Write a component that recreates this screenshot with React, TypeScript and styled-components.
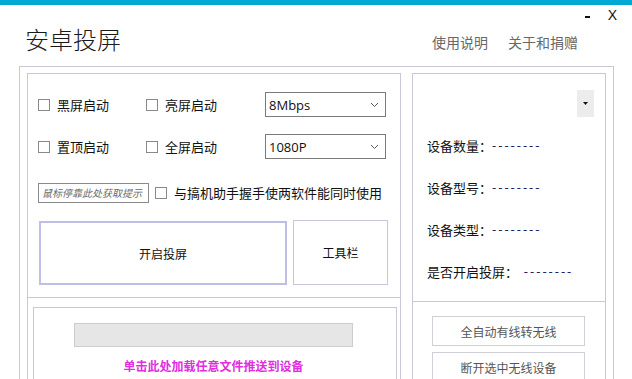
import React from "react";
import styled, { createGlobalStyle } from "styled-components";

const Global = createGlobalStyle`
  html, body { margin: 0; padding: 0; background: #fff; }
  body { font-family: "Noto Sans", "Noto Sans CJK SC", sans-serif; color: #111; }
  * { box-sizing: border-box; }
`;

const Page = styled.div`
  width: 632px;
  height: 379px;
  overflow: hidden;
  background: #fff;
  display: flex;
  flex-direction: column;
`;

const AccentBar = styled.div`
  height: 5px;
  background: #00a8d6;
  flex: none;
`;

const Header = styled.header`
  height: 61px;
  flex: none;
  display: flex;
  justify-content: space-between;
`;

const Title = styled.h1`
  margin: 0;
  padding: 22px 0 0 25px;
  font-family: "Noto Sans CJK SC", sans-serif;
  font-size: 24px;
  line-height: 24px;
  font-weight: 300;
  color: #1a1a1a;
`;

const HeaderRight = styled.div`
  display: flex;
  flex-direction: column;
  align-items: flex-end;
  padding-top: 3px;
`;

const WindowControls = styled.div`
  display: flex;
  align-items: center;
  gap: 18px;
  padding-right: 15px;
  height: 14px;
  font-family: "Liberation Sans", sans-serif;
  font-size: 14px;
  line-height: 14px;
  color: #111;
`;

const MinBtn = styled.span`
  width: 5px;
  height: 2px;
  margin-top: 3px;
  background: #111;
`;

const CloseBtn = styled.span`
  font-weight: 400;
`;

const Links = styled.nav`
  display: flex;
  gap: 20px;
  margin-top: 13px;
  padding-right: 54px;
  font-family: "Noto Sans CJK SC", sans-serif;
  font-size: 14px;
  line-height: 14px;
  color: #686868;
`;

const Frame = styled.div`
  margin-left: 19px;
  width: 595px;
  height: 330px;
  flex: none;
  border: 1px solid #c9c9d6;
  padding: 6px 7px 0 7px;
  display: flex;
  gap: 11px;
`;

const Panel = styled.section<{ $w: number }>`
  width: ${(p) => p.$w}px;
  flex: none;
  border: 1px solid #c9c9d6;
  display: flex;
  flex-direction: column;
`;

const TopSection = styled.div<{ $h: number }>`
  height: ${(p) => p.$h}px;
  flex: none;
  border-bottom: 1px solid #c9c9d6;
  display: flex;
  flex-direction: column;
`;

const OptionsArea = styled.div`
  padding: 18px 0 0 10px;
  display: flex;
  flex-direction: column;
`;

const Row = styled.div<{ $mt?: number }>`
  display: flex;
  align-items: center;
  height: 25px;
  margin-top: ${(p) => p.$mt ?? 0}px;
`;

const CheckItem = styled.label<{ $w?: number }>`
  display: flex;
  align-items: center;
  gap: 7px;
  width: ${(p) => (p.$w ? `${p.$w}px` : "auto")};
  font-family: "Noto Sans CJK SC", sans-serif;
  font-size: 13px;
  line-height: 16px;
  color: #111;
`;

const Box = styled.span`
  width: 12px;
  height: 12px;
  border: 1px solid #8a8a8a;
  background: #fff;
  flex: none;
`;

const Select = styled.div`
  width: 121px;
  height: 25px;
  border: 1px solid #7a7a7a;
  display: flex;
  align-items: center;
  justify-content: space-between;
  padding: 0 6px 0 3px;
  font-family: "Open Sans", "Noto Sans", sans-serif;
  font-size: 13px;
  color: #111;
`;

const HintBox = styled.div`
  width: 111px;
  height: 20px;
  border: 1px solid #8a8a8a;
  display: flex;
  align-items: center;
  padding-left: 3px;
  margin-right: 6px;
  font-family: "Noto Sans CJK SC", sans-serif;
  font-size: 10px;
  font-style: italic;
  color: #6a6a6a;
  white-space: nowrap;
  overflow: hidden;
`;

const ActionRow = styled.div`
  display: flex;
  align-items: flex-start;
  gap: 6px;
  margin: 15px 0 0 1px;
`;

const BigButton = styled.button`
  width: 248px;
  height: 64px;
  margin-top: 1px;
  border: 2px solid #bfbfe6;
  background: #fff;
  font-family: "Noto Sans CJK SC", sans-serif;
  font-size: 12px;
  color: #111;
  padding: 0;
`;

const ToolButton = styled.button`
  width: 95px;
  height: 65px;
  border: 1px solid #c6c6dc;
  background: #fff;
  font-family: "Noto Sans CJK SC", sans-serif;
  font-size: 12px;
  color: #111;
  padding: 0;
`;

const PushBox = styled.div`
  margin: 9px 3px 0 5px;
  flex: 1;
  border: 1px solid #c9c9d6;
  padding: 15px 0 0 40px;
`;

const PushInner = styled.div`
  width: 279px;
  display: flex;
  flex-direction: column;
  align-items: center;
`;

const Progress = styled.div`
  width: 279px;
  height: 24px;
  background: #e6e6e6;
  border: 1px solid #cdcdcd;
`;

const PushText = styled.div`
  margin-top: 11px;
  font-family: "Noto Sans CJK SC", sans-serif;
  font-size: 12px;
  line-height: 16px;
  font-weight: 700;
  color: #e02ee0;
`;

const DeviceArea = styled.div`
  display: flex;
  flex-direction: column;
`;

const DropButton = styled.div`
  align-self: flex-end;
  margin: 16px 11px 0 0;
  width: 17px;
  height: 27px;
  background: #ececec;
  display: flex;
  align-items: center;
  justify-content: center;
`;

const InfoList = styled.div`
  margin-top: 7px;
  padding-left: 14px;
  display: flex;
  flex-direction: column;
`;

const InfoRow = styled.div`
  height: 42px;
  display: flex;
  align-items: center;
  font-family: "Noto Sans CJK SC", sans-serif;
  font-size: 13px;
  color: #111;
  white-space: pre;
`;

const Dashes = styled.span`
  font-family: "Open Sans", sans-serif;
  letter-spacing: 2px;
  color: #202060;
`;

const SideButtons = styled.div`
  padding: 14px 0 0 19px;
  display: flex;
  flex-direction: column;
  gap: 6px;
`;

const SideButton = styled.button`
  width: 153px;
  height: 30px;
  border: 1px solid #cfcfd6;
  background: #fff;
  font-family: "Noto Sans CJK SC", sans-serif;
  font-size: 12px;
  color: #555;
  padding: 0;
`;

const Chevron = () => (
  <svg width="9" height="6" viewBox="0 0 9 6">
    <polyline points="1,1 4.5,4.5 8,1" fill="none" stroke="#555" strokeWidth="1" />
  </svg>
);

const Caret = () => (
  <svg width="5" height="3" viewBox="0 0 5 3">
    <polygon points="0,0 5,0 2.5,3" fill="#111" />
  </svg>
);

const Check = ({ label, w }: { label: string; w?: number }) => (
  <CheckItem $w={w}>
    <Box />
    {label}
  </CheckItem>
);

export default function App() {
  return (
    <Page>
      <Global />
      <AccentBar />
      <Header>
        <Title>安卓投屏</Title>
        <HeaderRight>
          <WindowControls>
            <MinBtn aria-label="最小化" />
            <CloseBtn>X</CloseBtn>
          </WindowControls>
          <Links>
            <span>使用说明</span>
            <span>关于和捐赠</span>
          </Links>
        </HeaderRight>
      </Header>
      <Frame>
        <Panel $w={374}>
          <TopSection $h={224}>
            <OptionsArea>
              <Row>
                <Check label="黑屏启动" w={108} />
                <Check label="亮屏启动" w={119} />
                <Select>
                  8Mbps
                  <Chevron />
                </Select>
              </Row>
              <Row $mt={17}>
                <Check label="置顶启动" w={108} />
                <Check label="全屏启动" w={119} />
                <Select>
                  1080P
                  <Chevron />
                </Select>
              </Row>
              <Row $mt={21}>
                <HintBox>鼠标停靠此处获取提示</HintBox>
                <Check label="与搞机助手握手使两软件能同时使用" />
              </Row>
              <ActionRow>
                <BigButton>开启投屏</BigButton>
                <ToolButton>工具栏</ToolButton>
              </ActionRow>
            </OptionsArea>
          </TopSection>
          <PushBox>
            <PushInner>
              <Progress />
              <PushText>单击此处加载任意文件推送到设备</PushText>
            </PushInner>
          </PushBox>
        </Panel>
        <Panel $w={194}>
          <TopSection $h={228}>
            <DeviceArea>
              <DropButton>
                <Caret />
              </DropButton>
              <InfoList>
                <InfoRow>
                  设备数量：<Dashes>--------</Dashes>
                </InfoRow>
                <InfoRow>
                  设备型号：<Dashes>--------</Dashes>
                </InfoRow>
                <InfoRow>
                  设备类型：<Dashes>--------</Dashes>
                </InfoRow>
                <InfoRow>
                  是否开启投屏：  <Dashes>--------</Dashes>
                </InfoRow>
              </InfoList>
            </DeviceArea>
          </TopSection>
          <SideButtons>
            <SideButton>全自动有线转无线</SideButton>
            <SideButton>断开选中无线设备</SideButton>
          </SideButtons>
        </Panel>
      </Frame>
    </Page>
  );
}
